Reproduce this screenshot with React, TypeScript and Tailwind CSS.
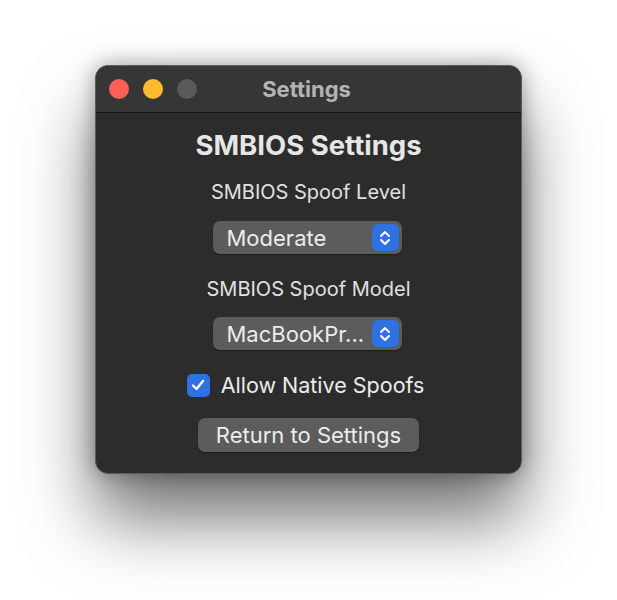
import React from "react";

function Stepper() {
  return (
    <div className="w-[27px] h-[27px] rounded-[6px] bg-[#2f70e3] flex items-center justify-center">
      <svg width="14" height="20" viewBox="0 0 14 20" fill="none" stroke="white" strokeWidth="2" strokeLinecap="round" strokeLinejoin="round">
        <path d="M3 8 L7 4 L11 8" />
        <path d="M3 12 L7 16 L11 12" />
      </svg>
    </div>
  );
}

function Popup({ label }: { label: string }) {
  return (
    <div className="w-[189px] h-[33px] rounded-[7px] bg-[#5c5c5c] flex items-center pl-[14px] pr-[3px] shadow-[0_1px_1px_rgba(0,0,0,0.4)]">
      <span className="flex-1 text-[22px] text-[#ececec] leading-none">{label}</span>
      <Stepper />
    </div>
  );
}

export default function App() {
  return (
    <div
      className="w-[617px] h-[600px] bg-white pt-[65px] pl-[95px]"
      style={{ fontFamily: "Inter, 'Noto Sans', 'Liberation Sans', sans-serif" }}
    >
      <div className="w-[427px] h-[409px] rounded-[13px] bg-[#2c2c2c] border border-[#5c5c5c] shadow-[0_45px_70px_rgba(0,0,0,0.55),0_0_22px_rgba(0,0,0,0.35)] overflow-hidden flex flex-col">
        <div className="h-[47px] bg-[#363636] border-b border-[#141414] flex items-center relative shrink-0">
          <div className="flex gap-[14px] pl-[13px]">
            <div className="w-[20px] h-[20px] rounded-full bg-[#fe5f57]" />
            <div className="w-[20px] h-[20px] rounded-full bg-[#febc2e]" />
            <div className="w-[20px] h-[20px] rounded-full bg-[#5a5a5a]" />
          </div>
          <div className="absolute inset-0 flex items-center justify-center text-[22px] font-bold text-[#b4b4b4] pr-[4px]">
            Settings
          </div>
        </div>
        <div className="flex flex-col items-center pt-[16px]">
          <div className="text-[27.5px] font-bold text-[#e6e6e6] leading-[32px]">SMBIOS Settings</div>
          <div className="mt-[19px] text-[20px] text-[#e0e0e0] leading-[24px]">SMBIOS Spoof Level</div>
          <div className="mt-[17px] pr-[3px]"><Popup label="Moderate" /></div>
          <div className="mt-[23px] text-[20px] text-[#e0e0e0] leading-[24px]">SMBIOS Spoof Model</div>
          <div className="mt-[16px] pr-[3px]"><Popup label="MacBookPr..." /></div>
          <div className="mt-[22px] flex items-center gap-[11px] pr-[6px]">
            <div className="w-[23px] h-[23px] rounded-[5px] bg-[#2f70e3] flex items-center justify-center">
              <svg width="16" height="16" viewBox="0 0 16 16" fill="none" stroke="white" strokeWidth="2.4" strokeLinecap="round" strokeLinejoin="round">
                <path d="M3 8.5 L6.5 12 L13 4" />
              </svg>
            </div>
            <span className="text-[21.5px] text-[#ececec] leading-[26px]">Allow Native Spoofs</span>
          </div>
          <div className="mt-[20px] w-[221px] h-[34px] rounded-[7px] bg-[#5c5c5c] flex items-center justify-center text-[22px] text-[#ececec] shadow-[0_1px_1px_rgba(0,0,0,0.4)]">
            Return to Settings
          </div>
        </div>
      </div>
    </div>
  );
}
